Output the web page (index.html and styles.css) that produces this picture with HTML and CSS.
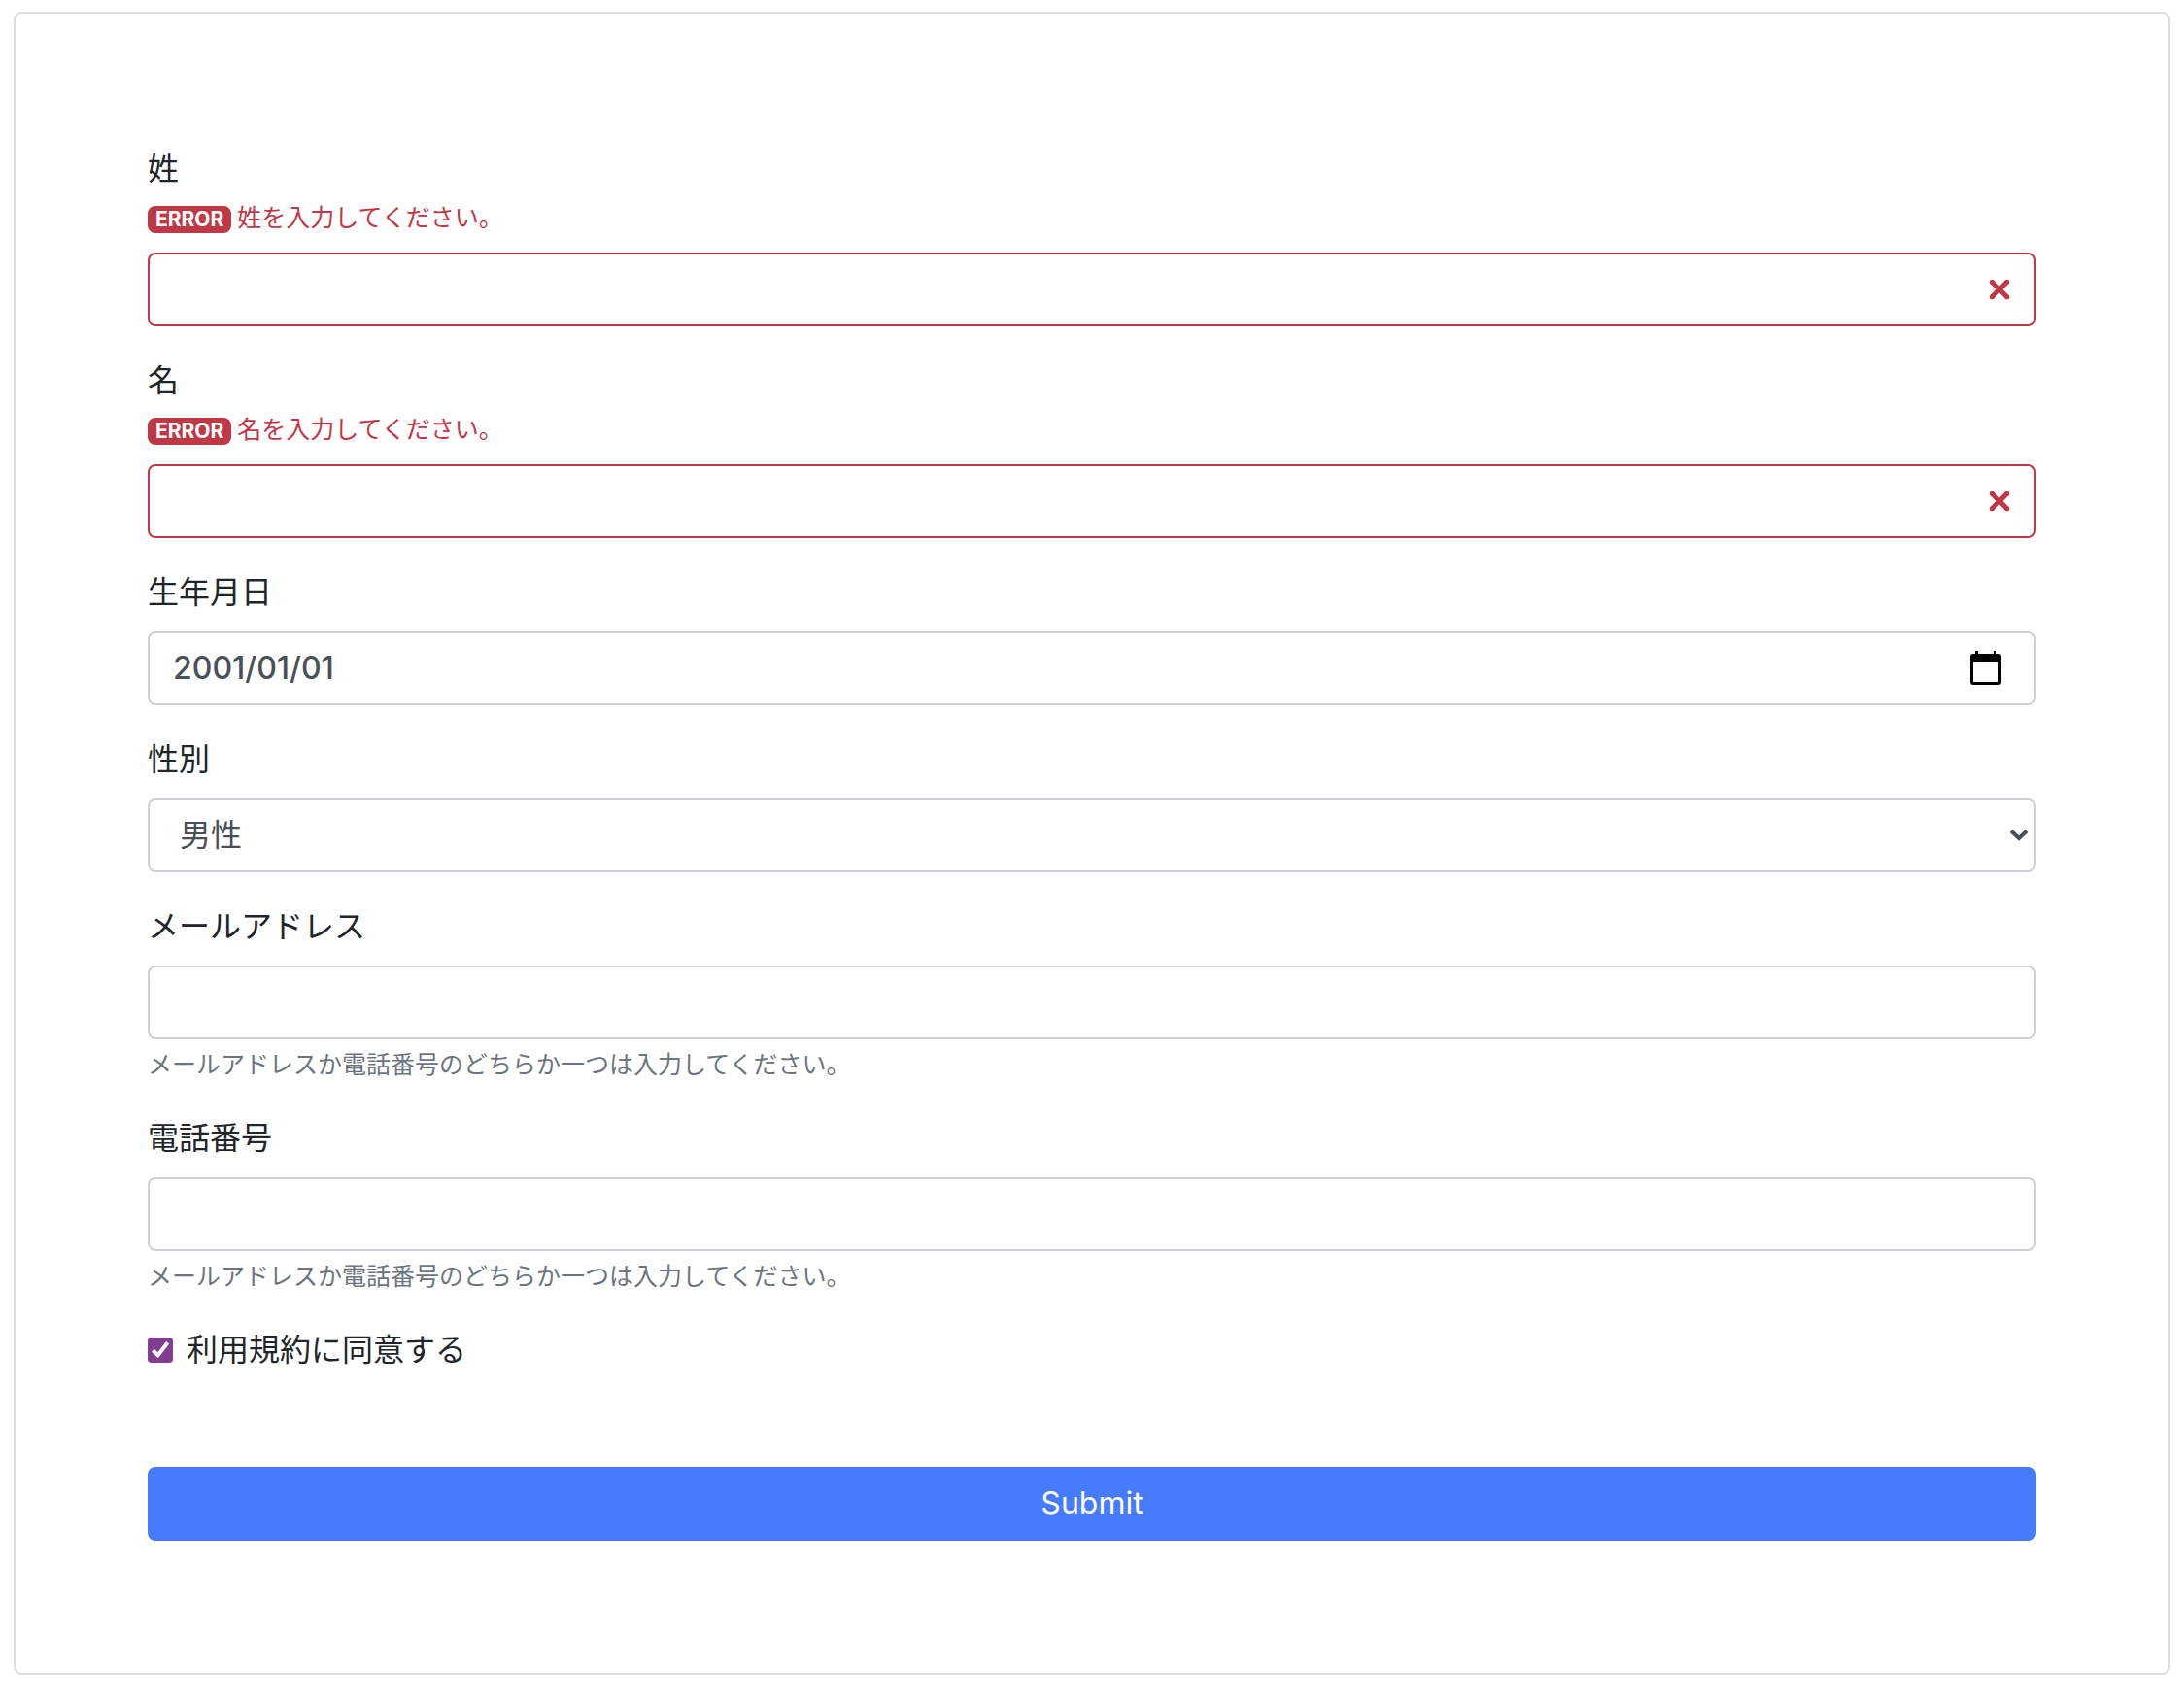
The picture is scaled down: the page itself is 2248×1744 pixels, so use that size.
FILE: index.html
```html
<!DOCTYPE html>
<html lang="ja">
<head>
  <meta charset="utf-8">
  <meta name="viewport" content="width=device-width, initial-scale=1">
  <title>登録フォーム</title>
  <link rel="stylesheet" href="styles.css">
</head>
<body>
  <main class="card">
    <form class="form" novalidate>
      <div class="field">
        <label class="label" for="last-name">姓</label>
        <p class="error" id="last-name-error"><span class="badge">ERROR</span>姓を入力してください。</p>
        <input class="control is-invalid" type="text" id="last-name" aria-invalid="true" aria-describedby="last-name-error">
      </div>

      <div class="field">
        <label class="label" for="first-name">名</label>
        <p class="error" id="first-name-error"><span class="badge">ERROR</span>名を入力してください。</p>
        <input class="control is-invalid" type="text" id="first-name" aria-invalid="true" aria-describedby="first-name-error">
      </div>

      <div class="field">
        <label class="label" for="birthday" id="birthday-label">生年月日</label>
        <div class="control date">
          <input class="date-input" type="text" id="birthday" inputmode="numeric" value="2001/01/01">
          <button class="date-button" type="button" aria-labelledby="birthday-label">
            <svg width="32" height="36" viewBox="0 0 32 36" aria-hidden="true">
              <path fill-rule="evenodd" d="M5 0h3v3h16V0h3v3h2a3 3 0 0 1 3 3v26a3 3 0 0 1-3 3H3a3 3 0 0 1-3-3V6a3 3 0 0 1 3-3h2zM3 12v20h26V12z"/>
            </svg>
          </button>
        </div>
      </div>

      <div class="field">
        <label class="label" for="gender">性別</label>
        <select class="control select" id="gender">
          <option selected>男性</option>
          <option>女性</option>
        </select>
      </div>

      <div class="field">
        <label class="label" for="email">メールアドレス</label>
        <input class="control" type="email" id="email" aria-describedby="email-help">
        <p class="help" id="email-help">メールアドレスか電話番号のどちらか一つは入力してください。</p>
      </div>

      <div class="field">
        <label class="label" for="tel">電話番号</label>
        <input class="control" type="tel" id="tel" aria-describedby="tel-help">
        <p class="help" id="tel-help">メールアドレスか電話番号のどちらか一つは入力してください。</p>
      </div>

      <div class="check">
        <input class="check-input" type="checkbox" id="terms" checked>
        <label for="terms">利用規約に同意する</label>
      </div>

      <button class="submit" type="submit">Submit</button>
    </form>
  </main>
</body>
</html>
```
FILE: styles.css
```css
:root {
  --text: #212529;
  --control-text: #495057;
  --muted: #6c757d;
  --border: #ced2d8;
  --danger: #bf3846;
  --primary: #467bfb;
  --accent: #823c92;
}

*,
*::before,
*::after {
  box-sizing: border-box;
}

body {
  margin: 0;
  padding: 12px 14px 20px;
  background: #fff;
  color: var(--text);
  font-family: Inter, "Noto Sans CJK JP", sans-serif;
  font-size: 32px;
  line-height: 48px;
}

input,
select,
button {
  margin: 0;
  font: inherit;
}

p {
  margin: 0;
}

.card {
  padding: 136px;
  border: 2px solid #ddd;
  border-radius: 8px;
}

.form {
  display: flex;
  flex-direction: column;
  gap: 32px;
}

.field {
  display: flex;
  flex-direction: column;
}

.label {
  margin-bottom: 16px;
}

.error,
.help {
  font-size: 25px;
  line-height: 36px;
}

.error {
  display: flex;
  align-items: center;
  gap: 6px;
  margin: -8px 0 18px;
  color: var(--danger);
}

.help {
  margin: 8px 0 2px;
  color: var(--muted);
}

.badge {
  margin-top: 4px;
  padding: 4px 8px;
  border-radius: 8px;
  background: var(--danger);
  color: #fff;
  font-size: 21px;
  font-weight: 700;
  line-height: 20px;
}

.control {
  width: 100%;
  height: 76px;
  padding: 12px 24px;
  border: 2px solid var(--border);
  border-radius: 8px;
  background: #fff;
  color: var(--control-text);
}

.is-invalid {
  padding-right: 72px;
  border-color: var(--danger);
  background: #fff url("data:image/svg+xml,%3Csvg xmlns='http://www.w3.org/2000/svg' viewBox='-2 -2 7 7' fill='%23bf3846' stroke='%23bf3846'%3E%3Cpath d='M0 0l3 3m0-3L0 3'/%3E%3Ccircle r='.5' stroke='none'/%3E%3Ccircle cx='3' r='.5' stroke='none'/%3E%3Ccircle cy='3' r='.5' stroke='none'/%3E%3Ccircle cx='3' cy='3' r='.5' stroke='none'/%3E%3C/svg%3E") no-repeat right 18px center / 36px 36px;
}

.date {
  display: flex;
  align-items: center;
  padding-right: 34px;
}

.date-input {
  flex: 1;
  min-width: 0;
  padding: 0;
  border: 0;
  outline: 0;
  background: none;
  color: inherit;
  font-weight: 500;
}

.date-button {
  display: flex;
  padding: 0;
  border: 0;
  background: none;
}

.select {
  appearance: none;
  padding-left: 31px;
  background: #fff url("data:image/svg+xml,%3Csvg xmlns='http://www.w3.org/2000/svg' viewBox='0 0 20 12' fill='none' stroke='%23495057' stroke-width='4'%3E%3Cpath d='M2 1.500L10 9l8-7.500'/%3E%3C/svg%3E") no-repeat right 6px center / 20px 12px;
}

.check {
  display: flex;
  align-items: center;
  gap: 14px;
}

.check-input {
  appearance: none;
  width: 26px;
  height: 26px;
  border-radius: 4px;
  background: #fff;
  border: 2px solid var(--border);
}

.check-input:checked {
  border: 0;
  background: var(--accent) url("data:image/svg+xml,%3Csvg xmlns='http://www.w3.org/2000/svg' viewBox='0 0 26 26' fill='none' stroke='%23fff' stroke-width='4'%3E%3Cpath d='M5.400 13.200l5.200 5L20.600 5.300'/%3E%3C/svg%3E") no-repeat center / 26px 26px;
}

.submit {
  height: 76px;
  margin-top: 64px;
  padding: 12px 24px;
  border: 0;
  border-radius: 8px;
  background: var(--primary);
  color: #fff;
}
```
